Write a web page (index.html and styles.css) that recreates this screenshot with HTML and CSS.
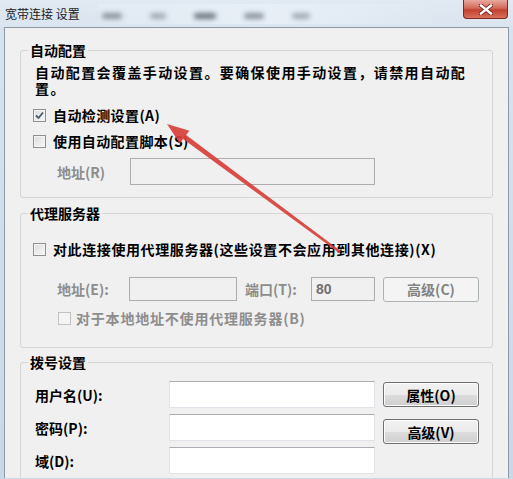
FILE: index.html
```html
<!DOCTYPE html>
<html lang="zh-CN">
<head>
    <meta charset="UTF-8">
    <meta name="viewport" content="width=device-width, initial-scale=1.0">
    <title>宽带连接 设置</title>
    <link rel="stylesheet" href="styles.css">
</head>
<body>
    <div class="window">
        <div class="titlebar">
            <span class="title">宽带连接 设置</span>
            <div class="glass">
                <span class="smudge s1"></span>
                <span class="smudge s2"></span>
                <span class="smudge s3"></span>
                <span class="smudge s4"></span>
                <span class="smudge s5"></span>
            </div>
            <button class="close" type="button" aria-label="关闭">
                <svg width="14" height="11" viewBox="0 0 14 11">
                    <path d="M2 1.5 L12 9.5 M12 1.5 L2 9.5" stroke="#6b1d14" stroke-width="4" stroke-linecap="square"/>
                    <path d="M2 1.5 L12 9.5 M12 1.5 L2 9.5" stroke="#fff" stroke-width="2.4" stroke-linecap="square"/>
                </svg>
            </button>
        </div>

        <div class="client">
            <fieldset class="group group-auto">
                <legend>自动配置</legend>
                <p class="desc">自动配置会覆盖手动设置。要确保使用手动设置，请禁用自动配<br>置。</p>
                <label class="check first-check">
                    <span class="box checked">
                        <svg width="9" height="9" viewBox="0 0 9 9"><path d="M1 4.5 L3.5 7 L8 1.5" fill="none" stroke="#4a5a6e" stroke-width="1.8"/></svg>
                    </span>
                    自动检测设置(A)
                </label>
                <label class="check">
                    <span class="box"></span>
                    使用自动配置脚本(S)
                </label>
                <div class="field-row script-row">
                    <span class="field-label muted">地址(R)</span>
                    <input class="textbox" type="text" disabled>
                </div>
            </fieldset>

            <fieldset class="group group-proxy">
                <legend>代理服务器</legend>
                <label class="check proxy-check">
                    <span class="box"></span>
                    对此连接使用代理服务器(这些设置不会应用到其他连接)(X)
                </label>
                <div class="field-row proxy-row">
                    <span class="field-label muted addr-label">地址(E):</span>
                    <input class="textbox addr-box" type="text" disabled>
                    <span class="field-label muted port-label">端口(T):</span>
                    <input class="textbox port-box" type="text" value="80" disabled>
                    <button class="btn" type="button" disabled>高级(C)</button>
                </div>
                <label class="check bypass-check muted">
                    <span class="box disabled"></span>
                    对于本地地址不使用代理服务器(B)
                </label>
            </fieldset>

            <fieldset class="group group-dial">
                <legend>拨号设置</legend>
                <div class="dial-grid">
                    <span class="field-label">用户名(U):</span>
                    <input class="textbox live" type="text">
                    <span class="field-label">密码(P):</span>
                    <input class="textbox live" type="password">
                    <span class="field-label">域(D):</span>
                    <input class="textbox live" type="text">
                    <div class="dial-buttons">
                        <button class="btn" type="button">属性(O)</button>
                        <button class="btn" type="button">高级(V)</button>
                    </div>
                </div>
            </fieldset>
        </div>

        <!-- red pointer drawn over the dialog -->
        <svg class="arrow" width="513" height="479" viewBox="0 0 513 479">
            <polygon points="167,124 189.4,130.7 186.1,135.1 340.7,251 339.3,253 183.1,139.1 179.8,143.5" fill="#d8403c" fill-opacity="0.92"/>
        </svg>
    </div>
</body>
</html>
```

FILE: styles.css
```css
body {
    margin: 0;
    width: 513px;
    height: 479px;
    overflow: hidden;
    background: linear-gradient(#d8e3ee, #cad8e6);
    font-family: "Noto Sans CJK SC", "Liberation Sans", sans-serif;
    color: #000;
}
.window {
    position: relative;
    height: 479px;
}
.titlebar {
    height: 27px;
    display: flex;
    align-items: center;
    padding-left: 5px;
    background: linear-gradient(#e1e9f2, #dbe5ef);
}
.title {
    font-size: 12px;
    line-height: 14px;
    color: #1b1b1b;
    margin-top: 1px;
}
.glass {
    display: flex;
    align-items: center;
    gap: 28px;
    margin-left: 18px;
    width: 330px;
    height: 20px;
    padding-left: 4px;
    background: linear-gradient(90deg, rgba(240, 245, 250, 0.2), rgba(232, 239, 247, 0.9), rgba(228, 236, 245, 0.2));
}
.smudge {
    display: block;
    height: 6px;
    margin-top: 4px;
    background: #8b949e;
    filter: blur(2.5px);
    border-radius: 3px;
}
.s1 { width: 20px; }
.s2 { width: 16px; opacity: 0.75; }
.s3 { width: 22px; background: #6d7580; }
.s4 { width: 20px; }
.s5 { width: 18px; opacity: 0.75; }
.close {
    margin-left: auto;
    margin-right: 5px;
    align-self: flex-start;
    width: 45px;
    height: 19px;
    padding: 0;
    border: 1px solid #7e2a21;
    border-top: none;
    border-radius: 0 0 4px 4px;
    background: linear-gradient(#e8a99e, #d36a5b 45%, #c2412f 55%, #d8705d);
    display: flex;
    align-items: center;
    justify-content: center;
}
.client {
    margin: 0 4px;
    height: 451px;
    box-sizing: border-box;
    border: 1px solid #8c99a7;
    border-bottom: none;
    background: #f0f0f0;
    padding: 14px 15px 0 15px;
}
.group {
    margin: 0;
    padding: 0;
    border: 1px solid #d5d5d5;
    border-radius: 3px;
    box-sizing: border-box;
    min-width: 0;
}
.group legend {
    margin-left: 7px;
    padding: 0 2px;
    font-size: 14px;
    line-height: 16px;
    font-weight: bold;
}
.group-auto {
    height: 156px;
}
.group-proxy {
    height: 143px;
    margin-top: 7px;
}
.group-dial {
    height: 140px;
    margin-top: 6px;
}
.desc {
    margin: 6px 0 0 14px;
    font-size: 14px;
    line-height: 16px;
    font-weight: bold;
    letter-spacing: 1.4px;
    white-space: nowrap;
}
.check {
    display: flex;
    align-items: center;
    height: 20px;
    margin-left: 12px;
    font-size: 14px;
    font-weight: bold;
    letter-spacing: 0.4px;
    white-space: nowrap;
}
.first-check {
    margin-top: 9px;
}
.check + .check {
    margin-top: 6px;
}
.box {
    width: 11px;
    height: 11px;
    flex: none;
    margin-right: 7px;
    border: 1px solid #8f8f8f;
    background: linear-gradient(135deg, #dcdcdc, #f8f8f8);
    box-shadow: inset 0 0 0 1px #f4f4f4;
    display: flex;
    align-items: center;
    justify-content: center;
}
.box.disabled {
    border-color: #c2c2c2;
    background: #f4f4f4;
}
.muted {
    color: #8d8d8d;
}
.field-row {
    display: flex;
    align-items: center;
}
.field-label {
    font-size: 14px;
    line-height: 16px;
    font-weight: bold;
    white-space: nowrap;
}
.textbox {
    box-sizing: border-box;
    margin: 0;
    padding: 0 5px;
    border: 1px solid #adadad;
    background: #f0f0f0;
    font-family: "Liberation Sans", sans-serif;
    font-size: 14px;
    font-weight: bold;
    color: #6f6f6f;
}
.textbox.live {
    background: #fff;
    border-color: #e0e3e8;
    border-top-color: #abadb3;
}
.script-row {
    margin: 7px 0 0 36px;
}
.script-row .field-label {
    width: 73px;
}
.script-row .textbox {
    width: 245px;
    height: 27px;
}
.proxy-check {
    margin-top: 18px;
    letter-spacing: 0.6px;
}
.proxy-row {
    margin: 17px 0 0 36px;
    height: 26px;
}
.addr-label {
    width: 72px;
}
.addr-box {
    width: 108px;
    height: 24px;
    margin-right: 8px;
}
.port-label {
    width: 66px;
}
.port-box {
    width: 64px;
    height: 24px;
    margin-right: 8px;
    padding-left: 4px;
}
.bypass-check {
    margin: 6px 0 0 37px;
    letter-spacing: 0.8px;
}
.bypass-check .box {
    margin-right: 5px;
}
.btn {
    box-sizing: border-box;
    width: 96px;
    height: 25px;
    padding: 0;
    border: 1px solid #707070;
    border-radius: 3px;
    background: linear-gradient(#f2f2f2, #ebebeb 50%, #dddddd 50%, #cfcfcf);
    box-shadow: inset 0 0 0 1px #fcfcfc;
    font-family: "Noto Sans CJK SC", "Liberation Sans", sans-serif;
    font-size: 14px;
    font-weight: bold;
    color: #000;
}
.btn:disabled {
    border-color: #adb2b5;
    background: #f4f4f4;
    box-shadow: none;
    color: #838383;
}
.dial-grid {
    display: grid;
    grid-template-columns: 126px 206px 96px;
    grid-auto-rows: 27px;
    column-gap: 8px;
    row-gap: 6px;
    align-items: center;
    margin: 11px 0 0 14px;
}
.dial-grid .textbox {
    height: 27px;
}
.dial-buttons {
    grid-column: 3;
    grid-row: 1 / span 3;
    align-self: start;
    display: flex;
    flex-direction: column;
    gap: 12px;
    padding-top: 1px;
}
.arrow {
    position: absolute;
    left: 0;
    top: 0;
    pointer-events: none;
}
```
